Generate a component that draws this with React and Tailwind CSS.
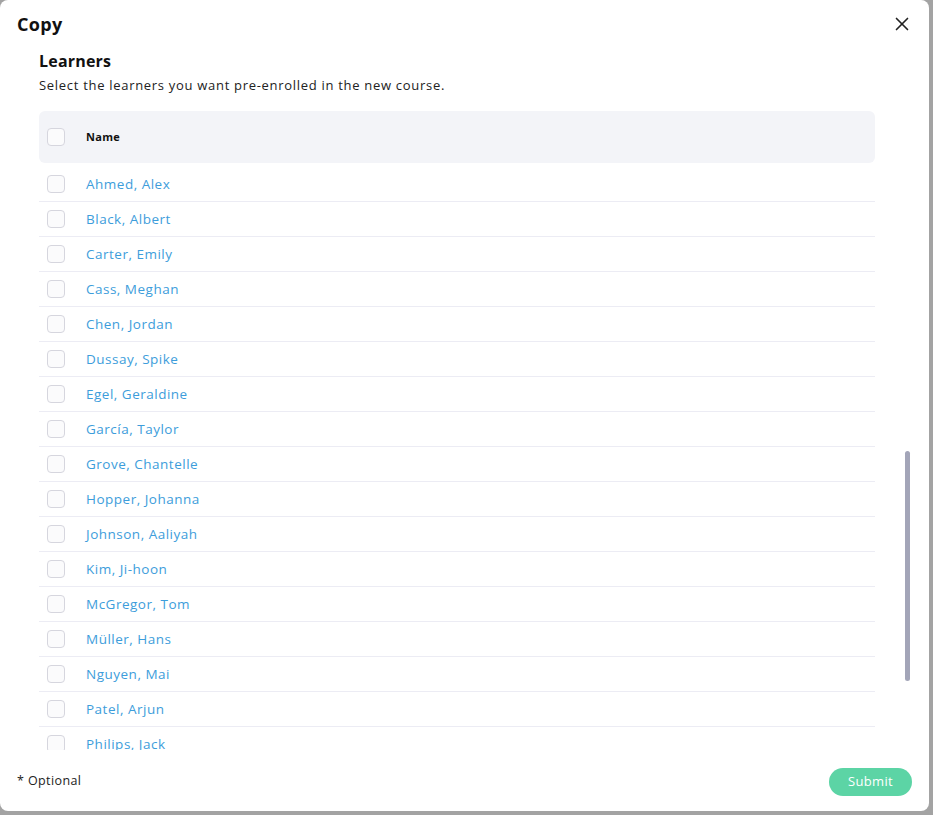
import React from 'react';
import { X } from 'lucide-react';

const learners = [
  'Ahmed, Alex',
  'Black, Albert',
  'Carter, Emily',
  'Cass, Meghan',
  'Chen, Jordan',
  'Dussay, Spike',
  'Egel, Geraldine',
  'García, Taylor',
  'Grove, Chantelle',
  'Hopper, Johanna',
  'Johnson, Aaliyah',
  'Kim, Ji-hoon',
  'McGregor, Tom',
  'Müller, Hans',
  'Nguyen, Mai',
  'Patel, Arjun',
  'Philips, Jack',
];

function Box() {
  return <span className="block w-[18px] h-[18px] rounded-[4px] border border-[#d6d6de] bg-[#fbfbfc] flex-shrink-0" />;
}

export default function App() {
  return (
    <div className="w-[933px] h-[815px] bg-[#a3a3a3] overflow-hidden" style={{ fontFamily: '"Open Sans", "Noto Sans", sans-serif' }}>
      <div className="relative w-[929px] h-[811px] bg-white rounded-lg flex flex-col overflow-hidden">
        {/* ── Header ── */}
        <div className="h-[50px] flex items-start justify-between pl-[17px] pr-[16px] pt-[11px] flex-shrink-0">
          <h1 className="text-[18px] font-bold text-[#111] leading-[26px] tracking-[0.3px]">Copy</h1>
          <button className="mt-[2px] text-[#222]">
            <X className="w-[22px] h-[22px]" strokeWidth={1.8} />
          </button>
        </div>

        {/* ── Body ── */}
        <div className="flex-1 overflow-hidden pl-[39px] pr-[54px]">
          <h2 className="text-[16px] font-bold text-[#111] leading-[22px] tracking-[0.2px]">Learners</h2>
          <p className="mt-[3px] text-[13px] text-[#222] leading-[20px] tracking-[0.7px]">
            Select the learners you want pre-enrolled in the new course.
          </p>

          <div className="mt-[16px] h-[52px] bg-[#f3f4f8] rounded-md flex items-center pl-[8px] gap-[21px]">
            <Box />
            <span className="text-[11px] font-bold text-[#111] tracking-[0.3px]">Name</span>
          </div>

          <div className="mt-[4px]">
            {learners.map(name => (
              <div key={name} className="h-[35px] border-b border-[#ececf4] flex items-center pl-[8px] gap-[21px]">
                <Box />
                <span className="text-[13.5px] text-[#3d9ddb] tracking-[0.5px]">{name}</span>
              </div>
            ))}
          </div>
        </div>

        {/* scrollbar thumb */}
        <div className="absolute left-[905px] top-[451px] w-[5px] h-[230px] rounded-full bg-[#a3a5b8]" />

        {/* ── Footer ── */}
        <div className="h-[61px] flex items-center justify-between pl-[17px] pr-[17px] flex-shrink-0">
          <span className="text-[12.5px] text-[#222] tracking-[0.4px] mt-[2px]">* Optional</span>
          <button className="w-[83px] h-[28px] rounded-full bg-[#5cd4a5] text-white text-[13px] tracking-[0.3px] mt-[2px]">
            Submit
          </button>
        </div>
      </div>
    </div>
  );
}
